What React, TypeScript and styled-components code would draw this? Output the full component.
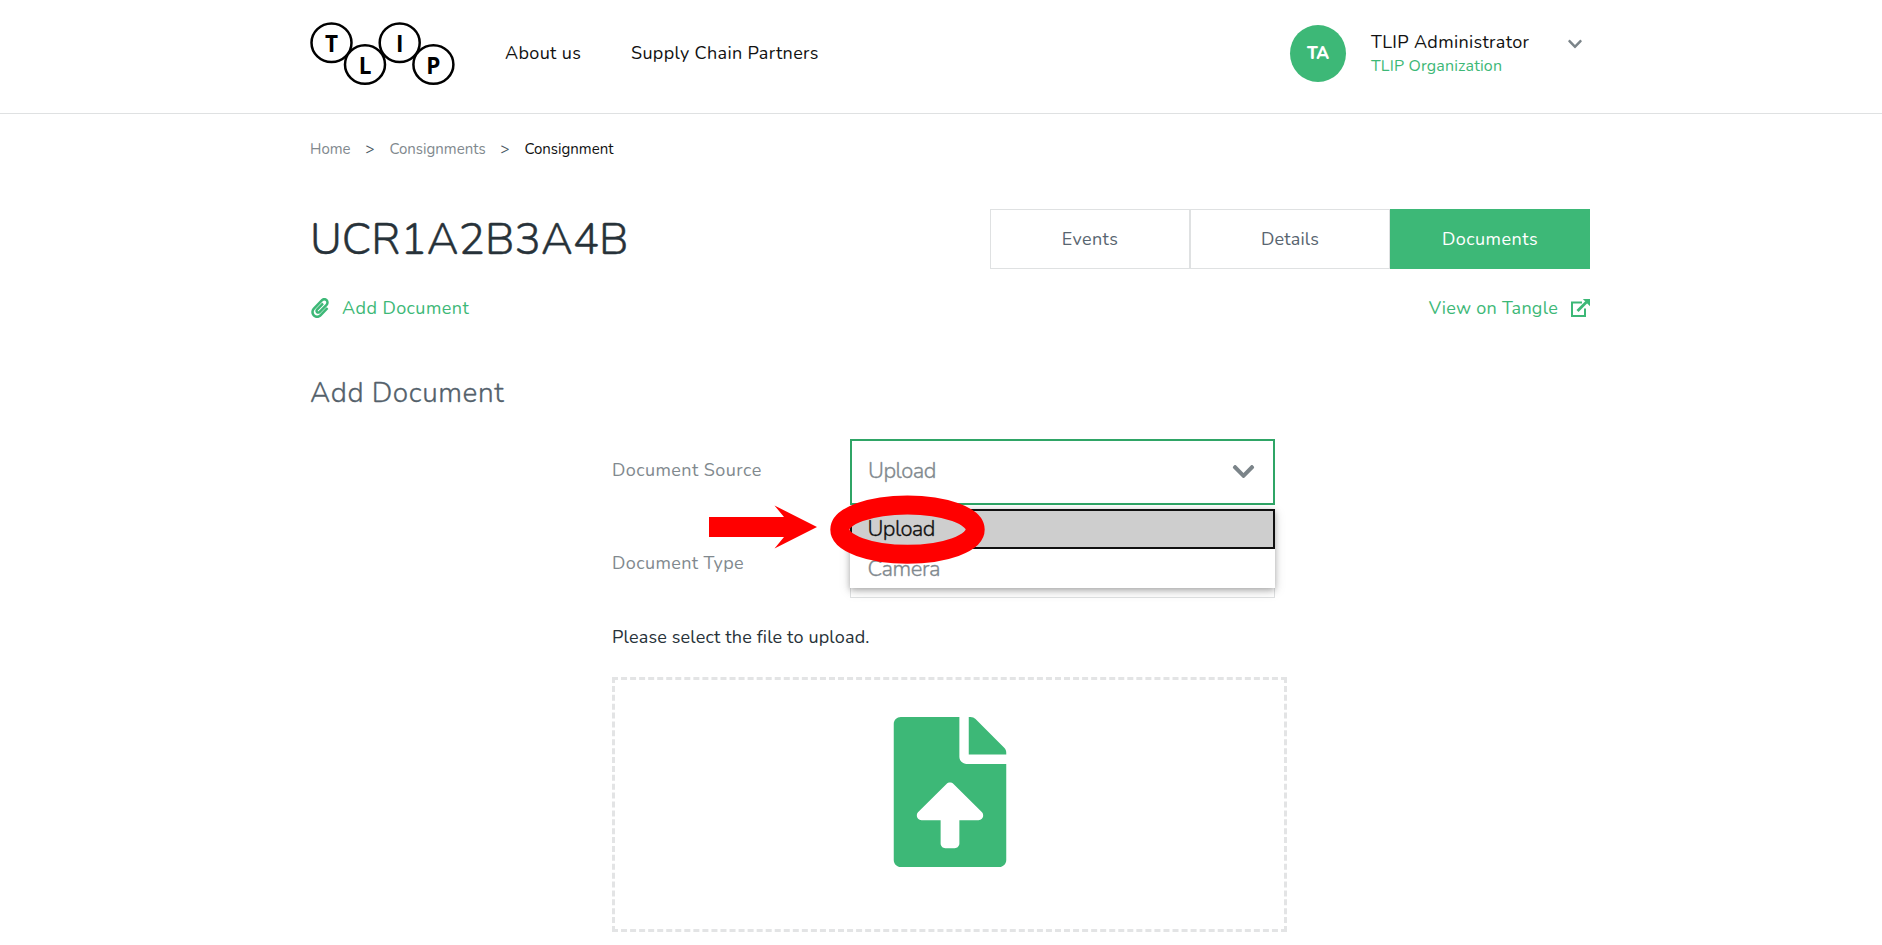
import React from 'react';
import styled, { createGlobalStyle } from 'styled-components';
import { FaChevronDown, FaFileUpload, FaPaperclip } from 'react-icons/fa';

const green = '#3db877';

const GlobalStyle = createGlobalStyle`
  * { box-sizing: border-box; }
  body { margin: 0; background: #fff; font-family: "Nunito", "Lato", sans-serif; color: #273239; overflow: hidden; }
`;

const Text = styled.span<{ $size: number; $track?: number; $color?: string; $weight?: number }>`
  font-size: ${p => p.$size}px;
  letter-spacing: ${p => p.$track ?? 0}px;
  color: ${p => p.$color ?? '#111'};
  font-weight: ${p => p.$weight ?? 400};
  white-space: nowrap;
`;
const LightText = styled(Text)`
  font-weight: 300;
  -webkit-text-stroke: 0.3px currentColor;
`;

const Header = styled.header`
  height: 114px;
  border-bottom: 1px solid #dfe1e2;
`;
const Container = styled.div`
  width: 1280px;
  margin-left: 310px;
`;
const HeaderRow = styled(Container)`
  display: flex;
  align-items: flex-start;
`;
const Logo = styled.svg`
  margin-top: 20px;
  width: 146px;
  height: 68px;
  font-family: "Open Sans", sans-serif;
  font-size: 22.5px;
  font-weight: 700;
`;
const Nav = styled.nav`
  display: flex;
  gap: 50px;
  margin: 41px 0 0 49px;
  line-height: 24px;
`;
const NavItem = styled.a<{ $w: number }>`
  width: ${p => p.$w}px;
`;
const Account = styled.div`
  display: flex;
  margin: 25px 7px 0 auto;
`;
const Avatar = styled.div`
  width: 56px;
  height: 57px;
  border-radius: 50%;
  background: ${green};
  display: flex;
  align-items: center;
  justify-content: center;
`;
const Who = styled.div`
  display: flex;
  flex-direction: column;
  width: 196px;
  margin: 5px 0 0 25px;
  line-height: 24px;
`;
const SmallChevron = styled(FaChevronDown)`
  width: 16px;
  height: 16px;
  margin-top: 11px;
  color: #7b8489;
`;

const Crumbs = styled.div`
  display: flex;
  justify-content: space-between;
  width: 303.5px;
  height: 24px;
  margin-top: 23px;
  line-height: 24px;
`;
const TitleRow = styled.div`
  display: flex;
  justify-content: space-between;
  height: 60px;
  margin-top: 48px;
`;
const Title = styled.h1`
  margin: 0;
  line-height: 62px;
  font-size: 44px;
  font-weight: 300;
  -webkit-text-stroke: 0.45px currentColor;
`;
const Tabs = styled.div`
  display: flex;
`;
const Tab = styled.button<{ $active?: boolean }>`
  width: 200px;
  height: 60px;
  padding: 0;
  font-family: inherit;
  background: ${p => (p.$active ? green : '#fff')};
  border: 1px solid ${p => (p.$active ? green : '#dfe1e2')};
`;
const ActionRow = styled.div`
  display: flex;
  justify-content: space-between;
  height: 24px;
  margin-top: 27px;
  line-height: 24px;
`;
const Action = styled.a<{ $gap?: number }>`
  display: flex;
  align-items: center;
  gap: ${p => p.$gap ?? 13}px;
  color: ${green};
`;
const SectionTitle = styled.h2`
  margin: 53px 0 0;
  height: 40px;
  line-height: 40px;
`;
const Form = styled.div`
  width: 675px;
  margin: 26px 0 0 302px;
`;
const Field = styled.div`
  position: relative;
  display: flex;
  justify-content: space-between;
  width: 663px;
  height: 66px;
  margin-bottom: 27px;
  line-height: 62px;
`;
const Select = styled.div<{ $focus?: boolean }>`
  display: flex;
  align-items: center;
  justify-content: space-between;
  width: 425px;
  height: 66px;
  padding: 0 ${p => (p.$focus ? 17 : 19)}px 1px 16px;
  border: ${p => (p.$focus ? '2px solid #2fa566' : '1px solid #dfe1e2')};
`;
const SelectValue = styled(LightText)`
  padding-bottom: 2px;
`;
const Menu = styled.div`
  position: absolute;
  z-index: 1;
  right: 0;
  top: 70px;
  width: 425px;
  height: 79px;
  background: #fff;
  box-shadow: 0 2px 6px rgba(0,0,0,.28), 0 3px 12px rgba(0,0,0,.12);
`;
const Option = styled.div<{ $selected?: boolean }>`
  height: ${p => (p.$selected ? 40 : 39)}px;
  padding-left: ${p => (p.$selected ? 15.5 : 17.5)}px;
  line-height: ${p => (p.$selected ? 36 : 41)}px;
  border: ${p => (p.$selected ? '2px solid #101010' : '0')};
  background: ${p => (p.$selected ? '#cecece' : '#fff')};
`;
const Annotation = styled.svg`
  position: absolute;
  z-index: 2;
  left: 88px;
  top: 46px;
  width: 300px;
  height: 90px;
`;
const Hint = styled.p`
  margin: 0;
  height: 24px;
  line-height: 24px;
`;
const DropZone = styled.div`
  display: flex;
  justify-content: center;
  width: 675px;
  height: 255px;
  margin-top: 28px;
  padding-top: 37px;
  border: 3px dashed #e3e4e5;
  color: ${green};
`;

const circles = [
  { l: 'T', x: 21.5, y: 22.7, base: 31.9 },
  { l: 'L', x: 55, y: 44.5, base: 53.6 },
  { l: 'I', x: 89.7, y: 22.7, base: 31.9 },
  { l: 'P', x: 123.4, y: 44.5, base: 53.6 },
];

export default function App() {
  return (
    <>
      <GlobalStyle />
      <Header>
        <HeaderRow>
          <Logo viewBox="0 0 146 68">
            {circles.map(c => (
              <g key={c.l}>
                <ellipse cx={c.x} cy={c.y} rx="20" ry="19.3" fill="#fff" stroke="#000" strokeWidth="2.5" />
                <text x={c.x} y={c.base} textAnchor="middle">{c.l}</text>
              </g>
            ))}
          </Logo>
          <Nav>
            <NavItem $w={76}><Text $size={18} $track={0.35}>About us</Text></NavItem>
            <NavItem $w={188}><Text $size={18} $track={0.34}>Supply Chain Partners</Text></NavItem>
          </Nav>
          <Account>
            <Avatar><Text $size={17} $weight={800} $color="#fff">TA</Text></Avatar>
            <Who>
              <Text $size={18} $track={0.34}>TLIP Administrator</Text>
              <Text $size={16} $track={0.16} $color={green}>TLIP Organization</Text>
            </Who>
            <SmallChevron />
          </Account>
        </HeaderRow>
      </Header>
      <Container as="main">
        <Crumbs>
          <Text $size={15} $color="#81898e">Home</Text>
          <Text $size={15} $color="#485761">&gt;</Text>
          <Text $size={15} $color="#81898e">Consignments</Text>
          <Text $size={15} $color="#485761">&gt;</Text>
          <Text $size={15}>Consignment</Text>
        </Crumbs>
        <TitleRow>
          <Title>UCR1A2B3A4B</Title>
          <Tabs>
            <Tab><Text $size={18} $track={0.4} $color="#586570">Events</Text></Tab>
            <Tab><Text $size={18} $track={0.2} $color="#586570">Details</Text></Tab>
            <Tab $active><Text $size={18} $track={0.45} $color="#fff">Documents</Text></Tab>
          </Tabs>
        </TitleRow>
        <ActionRow>
          <Action $gap={12}><FaPaperclip size={20} /><Text $size={18} $track={0.43} $color={green}>Add Document</Text></Action>
          <Action>
            <Text $size={18} $track={0.25} $color={green}>View on Tangle</Text>
            <svg width="19" height="18" viewBox="0 0 19 18" fill="none" stroke="currentColor" strokeWidth="2">
              <path d="M11 3.4H1V17h13V9.5" />
              <path d="M6.5 12l9-9" strokeWidth="2.8" />
              <path d="M11.8 0H19v7.2z" fill="currentColor" stroke="none" />
            </svg>
          </Action>
        </ActionRow>
        <SectionTitle><LightText $size={28} $track={0.6} $color="#54616b">Add Document</LightText></SectionTitle>
        <Form>
          <Field>
            <Text $size={18} $track={0.43} $color="#81898e">Document Source</Text>
            <Select $focus>
              <SelectValue $size={22} $track={-0.5} $color="#81898e">Upload</SelectValue>
              <FaChevronDown size={25} color="#7b8489" />
            </Select>
            <Menu>
              <Option $selected><LightText $size={22} $track={-0.6}>Upload</LightText></Option>
              <Option><LightText $size={22} $track={-0.4} $color="#81898e">Camera</LightText></Option>
            </Menu>
            <Annotation viewBox="700 485 300 90">
              <path d="M709 517H784L774.5 505.5L817 527L774.5 548.5L784 537H709Z" fill="#f00" />
              <ellipse cx="907.5" cy="529.6" rx="67.7" ry="24.7" fill="none" stroke="#f00" strokeWidth="19" />
            </Annotation>
          </Field>
          <Field>
            <Text $size={18} $track={0.4} $color="#81898e">Document Type</Text>
            <Select />
          </Field>
          <Hint><Text $size={18} $track={0.16} $color="#273239">Please select the file to upload.</Text></Hint>
          <DropZone><FaFileUpload size={150} /></DropZone>
        </Form>
      </Container>
    </>
  );
}
